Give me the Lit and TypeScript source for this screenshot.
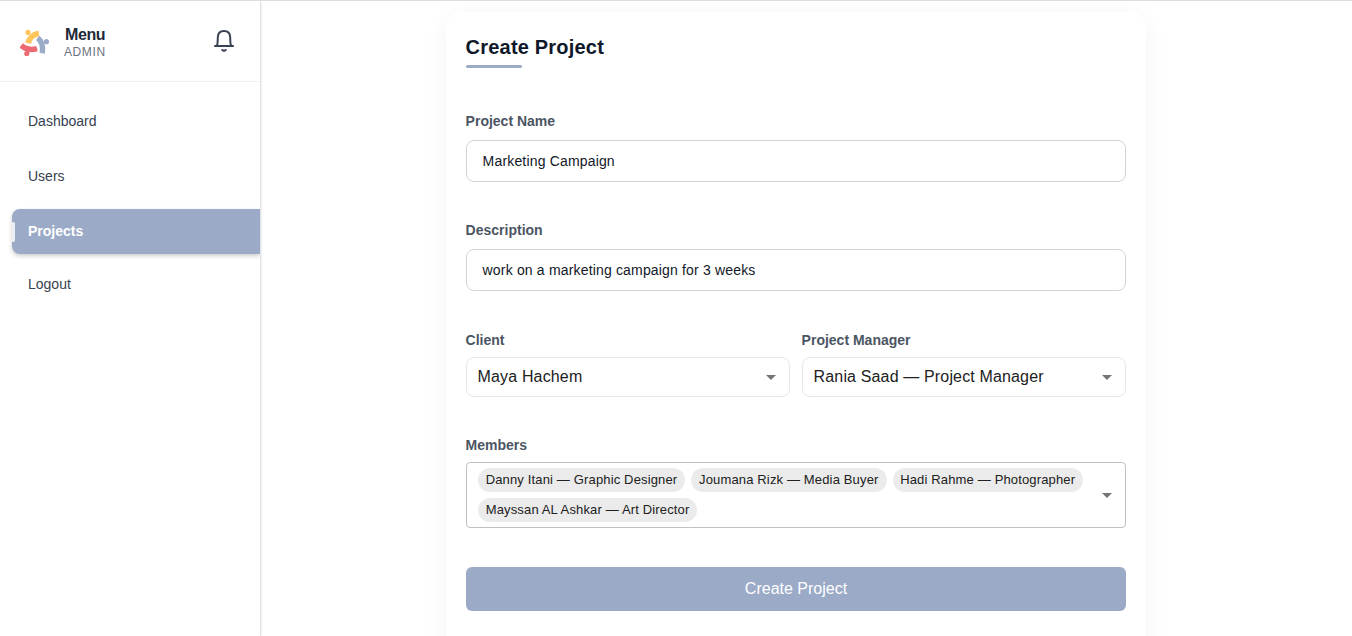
import { LitElement, html, css, svg } from "lit";
import { customElement, property } from "lit/decorators.js";
import { classMap } from "lit/directives/class-map.js";

@customElement("side-menu")
class SideMenu extends LitElement {
  @property() active = "Projects";
  static styles = css`
    :host { display: block; box-sizing: border-box; width: 260px; background: #fff; box-shadow: 1px 0 2px #d5d5dd; }
    header { box-sizing: border-box; height: 81px; border-bottom: 1px solid #f0f0f2; display: flex; align-items: center; padding: 0 24px 0 20px; }
    .logo { width: 30px; height: 30px; margin: 4px 14px 0 0; }
    .who { flex: 1; padding-top: 2px; }
    .name { font-size: 16px; line-height: 20px; font-weight: 700; color: #1f2937; letter-spacing: -0.4px; padding-left: 1px; }
    .role { font-size: 12px; line-height: 14px; color: #6b7280; letter-spacing: 0.6px; }
    .bell { width: 24px; height: 24px; margin-top: -2px; }
    nav { display: flex; flex-direction: column; gap: 10px; padding: 17px 0 0 12px; }
    .item { box-sizing: border-box; height: 45px; padding-left: 16px; line-height: 45px; font-size: 14px; color: #374151; border-radius: 8px 0 0 8px; }
    .active { display: flex; align-items: center; padding-left: 0; background: #9aaac7; color: #fff; font-weight: 700; margin-bottom: -2px; box-shadow: 0 2px 4px rgba(0,0,0,.2); clip-path: inset(-8px 0 -8px -8px); }
    .active::before { content: ""; width: 3px; height: 20px; margin-right: 13px; background: #eceff4; border-radius: 0 2px 2px 0; }
  `;
  render() {
    return html`
      <header>
        <svg class="logo" viewBox="0 0 30 30" fill="none">
          <g stroke="#ffc55c" stroke-width="5.8"><path d="M8.2 15.2C9 10.6 12.6 6.4 18.9 5.4"/></g>
          <g stroke="#ec6a72" stroke-width="5.6"><path d="M1.2 17.4C5 21 10.6 22.4 17 20.6"/></g>
          <g stroke="#9aabc8" stroke-width="5.4"><path d="M17.7 9.8C21.8 13 23.4 18.3 22.2 25.2"/></g>
          <circle cx="8" cy="4.4" r="2.6" fill="#ffc55c"/>
          <circle cx="6.8" cy="25.5" r="2.6" fill="#ec6a72"/>
          <circle cx="26.4" cy="13.7" r="2.6" fill="#9aabc8"/>
        </svg>
        <div class="who"><div class="name">Menu</div><div class="role">ADMIN</div></div>
        <svg class="bell" viewBox="0 0 24 24" fill="none" stroke="#374151" stroke-width="2" stroke-linecap="round" stroke-linejoin="round">
          <path d="M3 18H21"/>
          <path d="M5 17.7C5.9 15.4 5.7 12.5 5.8 9.2C6 5.3 8.4 3 12 3S18 5.3 18.2 9.2C18.3 12.5 18.1 15.4 19 17.7"/>
          <path d="M10.3 22C11.2 23 12.8 23 13.7 22"/>
        </svg>
      </header>
      <nav>${["Dashboard", "Users", "Projects", "Logout"].map(
        (t) => html`<div class=${classMap({ item: true, active: t === this.active })}>${t}</div>`
      )}</nav>`;
  }
}

@customElement("project-form")
class ProjectForm extends LitElement {
  static styles = css`
    :host { display: block; box-sizing: border-box; width: 700px; height: 700px; padding: 22px 20px; background: #fff; border-radius: 16px; box-shadow: 0 4px 24px rgba(0,0,0,.05); }
    h1 { margin: 0; font-size: 20px; line-height: 26px; font-weight: 700; color: #0f172a; letter-spacing: .2px; text-indent: -.4px; }
    .rule { width: 56px; height: 3px; margin-top: 5px; border-radius: 2px; background: #9aaac7; }
    .label { font-size: 14px; line-height: 16px; font-weight: 700; color: #4b5563; text-indent: -.4px; }
    .field { box-sizing: border-box; display: flex; align-items: center; border: 1px solid #d1d5db; border-radius: 8px; letter-spacing: .15px; }
    .first { margin-top: 45px; }
    .gap { margin-top: 40px; }
    .text { height: 42px; margin-top: 11px; padding: 0 15.6px; font-size: 14px; color: #111827; letter-spacing: .17px; }
    .row { display: grid; grid-template-columns: 1fr 1fr; gap: 12px; margin-top: 41px; }
    .select { height: 40px; margin-top: 9px; padding: 0 6px 1px 10.6px; border-color: #e2e8f0; font-size: 16px; color: #212121; justify-content: space-between; }
    .arrow { width: 24px; height: 24px; flex: none; fill: #757575; }
    .select .arrow { margin-top: 1px; }
    .members { height: 66px; margin-top: 9px; padding: 0 6px 0 11px; border-color: #c1c1c1; border-radius: 4px; }
    .chips { flex: 1; display: flex; flex-wrap: wrap; gap: 6px; margin-top: -1px; }
    .chip { box-sizing: border-box; height: 24px; line-height: 23px; padding: 0 8px 0 7.7px; border-radius: 12px; background: #ebebeb; font-size: 13px; color: #212121; white-space: nowrap; }
    .submit { height: 44px; line-height: 43px; margin-top: 39px; border-radius: 6px; background: #9aaac7; color: #fff; text-align: center; font-size: 16px; }
  `;
  arrow = svg`<svg class="arrow" viewBox="0 0 24 24"><path d="M7 10l5 5 5-5z"/></svg>`;
  members = ["Danny Itani — Graphic Designer", "Joumana Rizk — Media Buyer", "Hadi Rahme — Photographer", "Mayssan AL Ashkar — Art Director"];
  render() {
    return html`
      <h1>Create Project</h1>
      <div class="rule"></div>
      <div class="label first">Project Name</div>
      <div class="field text">Marketing Campaign</div>
      <div class="label gap">Description</div>
      <div class="field text">work on a marketing campaign for 3 weeks</div>
      <div class="row">
        <div><div class="label">Client</div><div class="field select"><span>Maya Hachem</span>${this.arrow}</div></div>
        <div><div class="label">Project Manager</div><div class="field select"><span>Rania Saad — Project Manager</span>${this.arrow}</div></div>
      </div>
      <div class="label gap">Members</div>
      <div class="field members">
        <div class="chips">${this.members.map((m) => html`<span class="chip">${m}</span>`)}</div>${this.arrow}
      </div>
      <div class="submit">Create Project</div>`;
  }
}

@customElement("app-root")
class AppRoot extends LitElement {
  static styles = css`
    :host { display: flex; box-sizing: border-box; width: 100%; height: 636px; overflow: hidden; border-top: 1px solid #dedede; background: #fff; font-family: "Liberation Sans", Arial, sans-serif; }
    main { flex: 1; display: flex; justify-content: center; align-items: flex-start; padding: 11px 20px 0 0; overflow: hidden; }
    side-menu { flex: none; position: relative; z-index: 1; }
    project-form { flex: none; }
  `;
  render() {
    return html`<side-menu></side-menu><main><project-form></project-form></main>`;
  }
}
